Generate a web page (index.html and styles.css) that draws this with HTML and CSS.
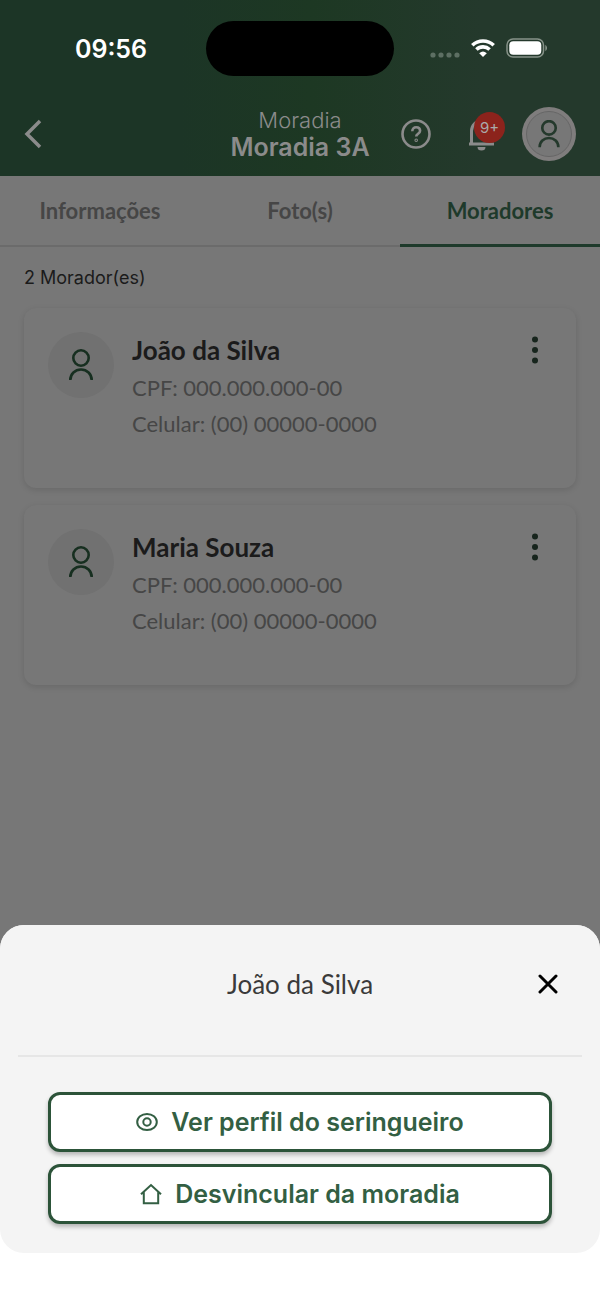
FILE: index.html
```
<!DOCTYPE html>
<html lang="pt-BR">
<head>
<meta charset="utf-8">
<meta name="viewport" content="width=device-width, initial-scale=1">
<title>Moradia 3A</title>
<link rel="stylesheet" href="styles.css">
</head>
<body>
<svg width="0" height="0" class="sprite" aria-hidden="true">
  <symbol id="person" viewBox="0 0 24 32">
    <circle cx="12" cy="9" r="7.7"/>
    <path d="M1.3 31c0-6 4.800-10.500 10.700-10.500S22.700 25 22.700 31"/>
  </symbol>
  <symbol id="dots" viewBox="0 0 6 28">
    <circle cx="3" cy="3.500" r="3"/><circle cx="3" cy="14" r="3"/><circle cx="3" cy="24.500" r="3"/>
  </symbol>
</svg>
<header class="header">
  <div class="status">
    <time class="clock">09:56</time>
    <div class="island"></div>
    <div class="signals">
      <svg width="30" height="6" viewBox="0 0 30 6" class="cell"><circle cx="3" cy="3" r="2.600"/><circle cx="11" cy="3" r="2.600"/><circle cx="19" cy="3" r="2.600"/><circle cx="27" cy="3" r="2.600"/></svg>
      <svg width="26" height="20" viewBox="0 0 26 20" class="wifi"><path d="M2.300 7.200a15.600 15.600 0 0 1 21.400 0" /><path d="M6.400 11.500a9.600 9.600 0 0 1 13.200 0"/><path class="fill" d="M9.200 15.200a5.800 5.800 0 0 1 7.600 0L13 19z"/></svg>
      <svg width="42" height="20" viewBox="0 0 42 20"><rect x="1" y="1" width="36.500" height="18" rx="6" fill="none" stroke="#879389" stroke-width="1.500"/><rect x="3.300" y="3.300" width="32" height="13.400" rx="4" fill="#fff"/><path d="M39.300 7c2.300 1 2.300 5 0 6z" fill="#879389"/></svg>
    </div>
  </div>
  <div class="navbar">
    <button class="icon-btn back" aria-label="Voltar"><svg width="18" height="30" viewBox="0 0 18 30"><path d="M16 2 3 15l13 13"/></svg></button>
    <div class="titles"><p class="overline">Moradia</p><h1 class="title">Moradia 3A</h1></div>
    <div class="actions">
      <button class="icon-btn help" aria-label="Ajuda"><svg width="30" height="30" viewBox="0 0 30 30"><circle cx="15" cy="15" r="13.500"/><path d="M11.300 12.200c0-2.300 1.600-3.900 3.900-3.900s3.900 1.500 3.900 3.500c0 2.900-3.900 3-3.900 5.700"/><circle cx="15.200" cy="21.300" r=".5" /></svg></button>
      <button class="icon-btn bell" aria-label="Notificações"><svg width="28" height="34" viewBox="0 0 28 34"><path d="M0 27h25M2.500 27V14C2.500 8 7 4 12.500 4s10 4 10 10"/><path class="clapper" d="M8.500 30h8a4 3.500 0 0 1-8 0z"/></svg><span class="badge">9+</span></button>
      <button class="icon-btn account" aria-label="Perfil"><span class="ring"><svg width="22" height="28"><use href="#person"/></svg></span></button>
    </div>
  </div>
</header>
<nav class="tabs">
  <a class="tab" href="#informacoes">Informações</a>
  <a class="tab" href="#fotos">Foto(s)</a>
  <a class="tab active" href="#moradores" aria-current="page">Moradores</a>
</nav>
<main class="content">
  <p class="count">2 Morador(es)</p>
  <article class="card">
    <span class="avatar"><svg width="24" height="32"><use href="#person"/></svg></span>
    <div class="info"><h2 class="name">João da Silva</h2><p class="detail">CPF: 000.000.000-00</p><p class="detail">Celular: (00) 00000-0000</p></div>
    <button class="more" aria-label="Opções de João da Silva"><svg width="6" height="28"><use href="#dots"/></svg></button>
  </article>
  <article class="card">
    <span class="avatar"><svg width="24" height="32"><use href="#person"/></svg></span>
    <div class="info"><h2 class="name">Maria Souza</h2><p class="detail">CPF: 000.000.000-00</p><p class="detail">Celular: (00) 00000-0000</p></div>
    <button class="more" aria-label="Opções de Maria Souza"><svg width="6" height="28"><use href="#dots"/></svg></button>
  </article>
</main>
<div class="sheet-wrap">
  <section class="sheet" role="dialog" aria-labelledby="sheet-title">
    <div class="sheet-head">
      <h2 class="sheet-title" id="sheet-title">João da Silva</h2>
      <button class="close" aria-label="Fechar"><svg width="20" height="20" viewBox="0 0 20 20"><path d="M2 2l16 16M18 2 2 18"/></svg></button>
    </div>
    <div class="sheet-actions">
      <button class="action"><svg width="22" height="22" viewBox="0 0 22 22"><path d="M1.200 11C1.200 6.500 5.500 3 11 3s9.800 3.500 9.800 8-4.300 8-9.800 8-9.800-3.500-9.800-8z"/><circle cx="11" cy="11" r="3.700"/></svg>Ver perfil do seringueiro</button>
      <button class="action"><svg width="22" height="22" viewBox="0 0 22 22"><path d="M1 11.300 11 2l10 9.300M3.800 9v11.300h14.400V9"/></svg>Desvincular da moradia</button>
    </div>
  </section>
</div>
</body>
</html>
```
FILE: styles.css
```
* { box-sizing: border-box; }
body { margin: 0; min-height: 100vh; background: #777; color: #1b1b1b; font-family: Lato, "Open Sans", sans-serif; }
h1, h2, p { margin: 0; }
button { margin: 0; padding: 0; border: 0; background: none; font: inherit; color: inherit; cursor: pointer; }
svg { display: block; fill: none; stroke: currentColor; }
.sprite { position: absolute; }

.header { height: 176px; background: linear-gradient(90deg, #1c3526 0%, #1c3526 30%, #1d3823 52%, #24392c 80%); color: #8b8b8b; font-family: Inter, sans-serif; }
.status { display: grid; grid-template-columns: 1fr 188px 1fr; align-items: center; height: 96px; }
.clock { padding: 2px 0 0 16px; text-align: center; color: #fff; font-size: 25px; font-weight: 600; line-height: 30px; }
.island { height: 55px; border-radius: 28px; background: #000; }
.signals { display: flex; align-items: center; justify-content: flex-end; gap: 10px; padding-right: 52px; }
.signals svg { stroke: none; }
.cell { align-self: flex-end; fill: #5d6f63; }
.signals .wifi { fill: none; stroke: #fff; stroke-width: 3.6; }
.wifi .fill { fill: #fff; stroke: none; }
.navbar { display: grid; grid-template-columns: 1fr auto 1fr; align-items: center; height: 76px; padding: 0 24px; }
.icon-btn { position: relative; display: block; stroke-width: 3; }
.back { justify-self: start; }
.back svg { stroke-width: 3.5; }
.titles { text-align: center; }
.overline { font-size: 22px; font-weight: 300; line-height: 26px; }
.title { font-size: 25px; font-weight: 600; line-height: 28px; }
.actions { display: flex; align-items: center; justify-content: flex-end; gap: 25px; }
.help { margin-right: 13px; stroke-width: 2.6; }
.badge { position: absolute; top: -5px; right: -8px; width: 31px; height: 31px; border-radius: 50%; background: #8c231c; color: #aaa; font-size: 15px; line-height: 31px; }
.bell .clapper { fill: currentColor; stroke: none; }
.account { width: 54px; height: 54px; padding: 4px; border-radius: 50%; background: #7f7d7d; color: #24392c; }
.ring { display: grid; place-items: center; height: 100%; border: 1px solid #666; border-radius: 50%; background: #777; }

.tabs { display: flex; height: 71px; font-size: 22px; font-weight: 700; }
.tab { flex: 1; border-bottom: 2px solid #6b6b6b; color: #464646; line-height: 69px; text-align: center; text-decoration: none; }
.tab.active { border-bottom: 3px solid #1e3a2b; color: #1e3a2b; }
.content { display: flex; flex-direction: column; gap: 17px; padding: 18px 24px; }
.count { font: 400 18px/26px Inter, sans-serif; }
.card { display: flex; gap: 18px; height: 180px; padding: 24px; border-radius: 12px; background: #777; box-shadow: 0 2px 6px rgba(0, 0, 0, 0.12); }
.avatar { display: grid; flex: none; place-items: center; width: 66px; height: 66px; border-radius: 50%; background: #717171; color: #172f20; stroke-width: 2.6; }
.info { flex: 1; }
.name { padding-bottom: 2px; font-size: 26px; font-weight: 700; line-height: 36px; }
.detail { color: #464646; font-size: 22px; line-height: 36px; }
.more { align-self: flex-start; padding: 4px 14px; color: #17251d; }
.more svg { fill: currentColor; stroke: none; }

.sheet-wrap { position: fixed; right: 0; bottom: 0; left: 0; padding-bottom: 51px; border-radius: 24px 24px 0 0; background: #fff; }
.sheet { padding: 0 18px 29px; border-radius: 24px; background: #f4f4f4; }
.sheet-head { display: grid; grid-template-columns: 1fr auto 1fr; align-items: center; height: 132px; padding: 0 24px 12px; border-bottom: 2px solid #e6e6e6; }
.sheet-title { grid-column: 2; color: #3a3a3a; font-size: 26px; font-weight: 400; line-height: 36px; }
.close { justify-self: end; color: #000; stroke-width: 3; stroke-linecap: round; }
.sheet-actions { display: grid; gap: 12px; padding: 35px 30px 0; }
.action { display: flex; align-items: center; justify-content: center; gap: 13px; height: 60px; border: 3px solid #2c5339; border-radius: 12px; background: #fff; box-shadow: 0 3px 4px rgba(0, 0, 0, 0.25); color: #335f43; font: 600 25px/30px Inter, sans-serif; }
.action svg { stroke-width: 2; }
```
